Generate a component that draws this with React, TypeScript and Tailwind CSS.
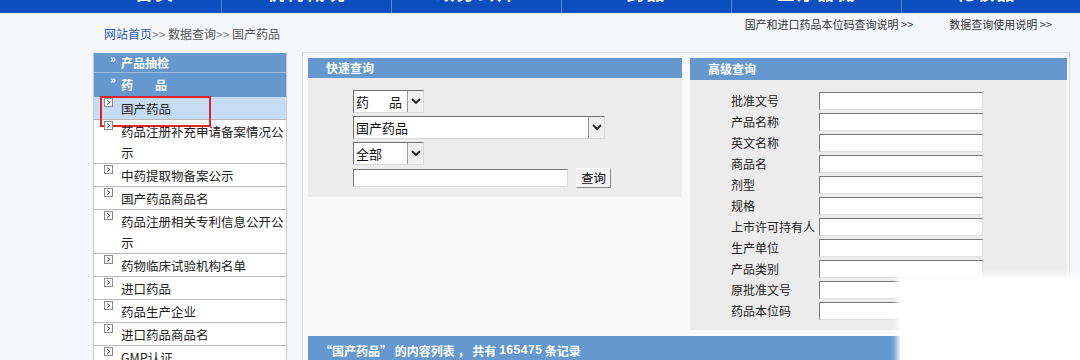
import React from "react";

const FONT = { fontFamily: '"Noto Sans CJK SC", "Noto Sans", sans-serif' };

function RowIcon() {
  return (
    <svg width="9" height="9" viewBox="0 0 9 9" className="shrink-0 mt-[1px]">
      <rect x="0.5" y="0.5" width="8" height="8" fill="#fff" stroke="#8a8a8a" />
      <path d="M3 2.5 L6 4.5 L3 6.5" fill="none" stroke="#555" strokeWidth="1" />
    </svg>
  );
}

function Chevron() {
  return (
    <svg width="10" height="7" viewBox="0 0 10 7">
      <path d="M1 1 L5 5 L9 1" fill="none" stroke="#222" strokeWidth="1.8" />
    </svg>
  );
}

function Select({ w, children }: { w: string; children: React.ReactNode }) {
  return (
    <div className={`${w} h-[23px] flex bg-white border border-t-[#6f6f6f] border-l-[#6f6f6f] border-b-[#d8d8d8] border-r-[#d8d8d8]`}>
      <div className="flex-1 flex items-center pl-[2px] text-[13px] text-[#111]">{children}</div>
      <div className="w-[16px] h-full flex items-center justify-center bg-[#efefef] border-l border-[#9a9a9a]">
        <Chevron />
      </div>
    </div>
  );
}

function Input({ w }: { w: string }) {
  return (
    <div className={`${w} h-[18px] bg-white border border-t-[#777] border-l-[#777] border-b-[#dedede] border-r-[#dedede]`} />
  );
}

const sideItems: { lines: string[]; active?: boolean }[] = [
  { lines: ["国产药品"], active: true },
  { lines: ["药品注册补充申请备案情况公", "示"] },
  { lines: ["中药提取物备案公示"] },
  { lines: ["国产药品商品名"] },
  { lines: ["药品注册相关专利信息公开公", "示"] },
  { lines: ["药物临床试验机构名单"] },
  { lines: ["进口药品"] },
  { lines: ["药品生产企业"] },
  { lines: ["进口药品商品名"] },
  { lines: ["GMP认证"] },
];

const advFields = [
  "批准文号",
  "产品名称",
  "英文名称",
  "商品名",
  "剂型",
  "规格",
  "上市许可持有人",
  "生产单位",
  "产品类别",
  "原批准文号",
  "药品本位码",
];

const navItems = ["首页", "机构概况", "政务公开", "药品", "医疗器械", "化妆品"];

export default function App() {
  return (
    <div className="relative w-[1080px] h-[360px] overflow-hidden bg-[#f5f7fa]" style={FONT}>
      {/* top nav */}
      <div className="h-[13px] bg-[#0b4fbf] flex pl-[51px] overflow-hidden">
        {navItems.map((n, i) => (
          <div
            key={n}
            className={`w-[170px] shrink-0 h-full flex justify-center ${i > 0 ? "border-l border-[#5d86d4]" : "pl-[38px]"}`}
          >
            <span className="text-white font-bold text-[18px] leading-[18px] mt-[-17px] tracking-[2px]">{n}</span>
          </div>
        ))}
      </div>

      {/* breadcrumb row */}
      <div className="h-[39px] flex justify-between">
        <div className="pl-[104px] pt-[13px] text-[12px] text-[#555] leading-[16px]">
          <span className="text-[#2a5caa]">网站首页</span>
          <span className="text-[#888]">&gt;&gt; </span>数据查询<span className="text-[#888]">&gt;&gt; </span>国产药品
        </div>
        <div className="pr-[28px] pt-[3px] flex gap-[36px] text-[11px] text-[#333] leading-[16px]">
          <span>国产和进口药品本位码查询说明 &gt;&gt;</span>
          <span>数据查询使用说明 &gt;&gt;</span>
        </div>
      </div>

      {/* main */}
      <div className="flex pl-[93px] gap-[15px] items-start">
        {/* sidebar */}
        <div className="w-[194px] shrink-0 bg-white border-x border-[#c8c8c8] pt-[1px]">
          <div className="h-[20px] bg-[#6598ce] relative pl-[27px] flex items-center text-white text-[12px] font-bold border-b border-[#9cbde0]">
            <span className="absolute left-[16px] top-[-3px] text-[11px] font-bold">»</span>
            产品抽检
          </div>
          <div className="h-[24px] bg-[#6598ce] relative pl-[27px] flex items-center text-white text-[12px] font-bold">
            <span className="absolute left-[16px] top-[-2px] text-[11px] font-bold">»</span>
            药<span className="ml-[22px]">品</span>
          </div>
          {sideItems.map((it, idx) => (
            <div
              key={idx}
              className={`relative flex gap-[8px] pl-[10px] border-b border-[#b9b9b9] ${it.active ? "bg-[#c6dcf4]" : ""}`}
            >
              <RowIcon />
              <div className="text-[12.5px] leading-[21px] text-[#222] whitespace-nowrap pt-[1px]">
                {it.lines.map((l, j) => (
                  <div key={j}>{l}</div>
                ))}
              </div>
              {it.active && (
                <div className="absolute left-[6px] top-[-1px] w-[111px] h-[31px] border-2 border-[#e1222b]" />
              )}
            </div>
          ))}
        </div>

        {/* content box */}
        <div className="w-[768px] shrink-0 h-[320px] bg-[#f9f9f9] border border-[#dcdcdc] pl-[5px] pr-[1px] pt-[5px] flex flex-col gap-[6px]">
          <div className="flex gap-[8px] items-start">
            {/* quick query */}
            <div className="w-[374px] h-[139px] bg-[#ececec]">
              <div className="h-[20px] bg-[#6598ce] pl-[18px] flex items-center text-white text-[12px] font-bold">
                快速查询
              </div>
              <div className="pl-[45px] pt-[12px] flex flex-col gap-[3px]">
                <Select w="w-[71px]">
                  <span className="flex justify-between w-[46px]">
                    <span>药</span>
                    <span>品</span>
                  </span>
                </Select>
                <Select w="w-[252px]">国产药品</Select>
                <Select w="w-[71px]">全部</Select>
                <div className="flex items-center gap-[8px]">
                  <Input w="w-[215px]" />
                  <div className="w-[35px] h-[20px] flex items-center justify-center bg-[#f3f3f3] border border-t-[#fff] border-l-[#fff] border-b-[#888] border-r-[#888] text-[12.5px] text-[#111]">
                    查询
                  </div>
                </div>
              </div>
            </div>

            {/* advanced query */}
            <div className="w-[377px] h-[272px] bg-[#ececec]">
              <div className="h-[22px] bg-[#6598ce] pl-[18px] flex items-center text-white text-[12px] font-bold">
                高级查询
              </div>
              <div className="pt-[10px] pl-[41px] flex flex-col">
                {advFields.map((f) => (
                  <div key={f} className="h-[21px] flex items-center">
                    <span className="w-[88px] text-[12px] text-[#222] whitespace-nowrap">{f}</span>
                    <Input w="w-[164px]" />
                  </div>
                ))}
              </div>
            </div>
          </div>

          {/* result bar */}
          <div className="h-[30px] bg-[#6598ce] pl-[12px] flex items-center text-white text-[12px] font-bold whitespace-pre">
            “国产药品” 的内容列表 ， 共有 <span style={{ fontFamily: '"Liberation Mono", monospace' }}>165475</span> 条记录
          </div>
        </div>
      </div>

      {/* white overlay patch */}
      <div className="absolute left-[900px] top-[278px] w-[190px] h-[90px] bg-white shadow-[0_0_6px_3px_#ffffff]" />
    </div>
  );
}
